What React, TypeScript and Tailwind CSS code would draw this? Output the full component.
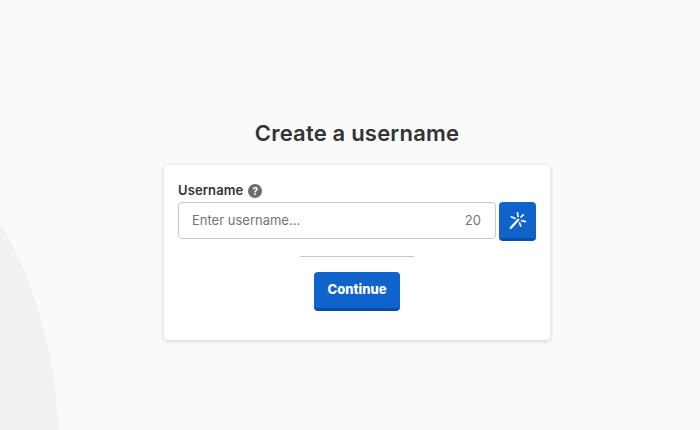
const WandIcon = () => (
  <svg viewBox="0 0 18 18" className="h-[18px] w-[18px]" fill="none" stroke="currentColor" strokeLinecap="round">
    <path d="M1.7 17L9.3 8.7" strokeWidth="2.2" />
    <path d="M8.5 1.8L9 5.5M14.2 3.8L12 6M16.4 10.6L12.7 9.6M11.7 15L10.6 12M2.3 5.8L6 7.5" strokeWidth="1.7" />
  </svg>
);

const App = () => {
  return (
    <div className="relative h-[430px] w-[700px] overflow-hidden bg-[#fafafa] font-['Inter','Liberation_Sans',sans-serif]">
      {/* Background circle */}
      <div className="absolute left-[-820px] top-[1px] h-[878px] w-[878px] rounded-full bg-[#f1f1f1]"></div>

      <main className="relative flex flex-col items-center pl-[14px] pt-[118px]">
        <h1 className="mb-[17px] h-[30px] text-[22px] font-semibold leading-[30px] tracking-[0.2px] text-[#333333]">
          Create a username
        </h1>

        <div className="h-[175px] w-[386px] rounded bg-white px-[14px] pt-[16px] shadow-[0_1px_4px_rgba(0,0,0,0.18)]">
          <div className="mb-[3px] flex h-[18px] items-center gap-[5px]">
            <span className="text-[13px] font-semibold leading-[18px] tracking-[0.1px] text-[#333333]">Username</span>
            <span className="mt-[2px] flex h-[14px] w-[14px] items-center justify-center rounded-full bg-[#6b6b6b] text-[10px] font-bold leading-none text-white">
              ?
            </span>
          </div>

          <div className="flex gap-[3px]">
            <div className="flex h-[37px] w-[318px] items-center justify-between rounded border border-[#c9c9c9] bg-white pl-[13px] pr-[14px] text-[13px] text-[#757575]">
              <span>Enter username...</span>
              <span>20</span>
            </div>
            <button className="flex h-[39px] w-[37px] items-center justify-center rounded border-b-[3px] border-[#0a4ea8] bg-[#1163cc] text-white">
              <WandIcon />
            </button>
          </div>

          <div className="mx-auto mt-[15px] w-[114px] border-t border-[#c8c8c8]"></div>

          <div className="mt-[15px] flex justify-center">
            <button className="h-[39px] w-[86px] rounded border-b-[3px] border-[#0a4ea8] bg-[#1163cc] text-[13px] font-extrabold text-white">
              Continue
            </button>
          </div>
        </div>
      </main>
    </div>
  );
};

export default App;
